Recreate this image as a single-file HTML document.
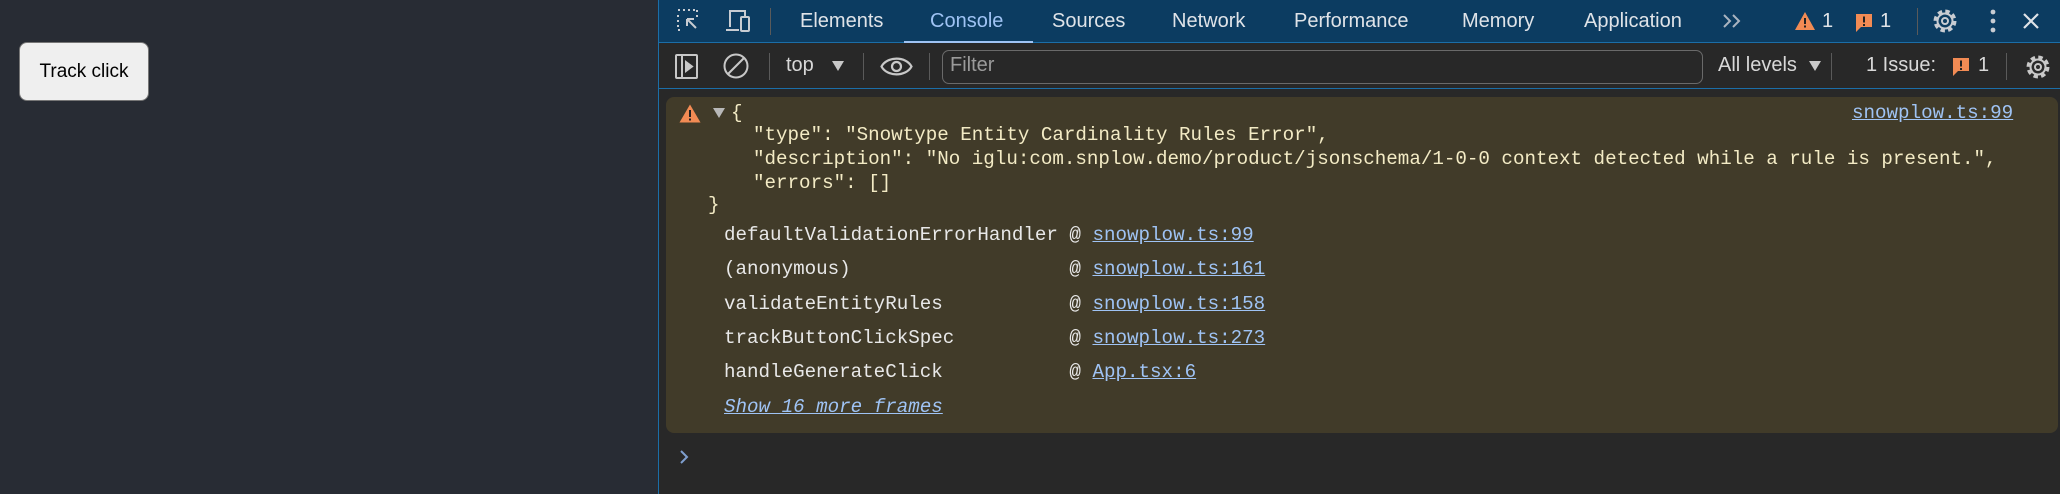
<!DOCTYPE html>
<html><head><meta charset="utf-8"><style>
*{margin:0;padding:0;box-sizing:border-box}
body{width:2060px;height:494px;overflow:hidden;background:#282828;font-family:"Liberation Sans",sans-serif;position:relative}
.abs{position:absolute}
#page{left:0;top:0;width:658px;height:494px;background:#282c34}
#btn{left:19px;top:42px;width:130px;height:59px;background:#efefef;border:1px solid #767676;border-radius:8px;font-size:19px;color:#000;text-align:center;line-height:57px}
#dt{left:658px;top:0;width:1402px;height:494px;background:#282828;border-left:1px solid #1b6ea8}
#tabs{left:0;top:0;width:2060px;height:43px;}
#tabbg{left:659px;top:0;width:1401px;height:43px;background:#0c3c61;border-bottom:1px solid #1b6ea8}
.tab{position:absolute;top:0;height:43px;line-height:42px;font-size:20px;color:#dfe3e8}
#toolbg{left:659px;top:44px;width:1401px;height:45px;background:#282828;border-bottom:1px solid #1b6ea8}
.t2{position:absolute;font-size:20px;color:#d8d8d8;top:54px}
.sep{position:absolute;width:1px;background:#5a5a5a}
.mono{font-family:"Liberation Mono","DejaVu Sans Mono",monospace;font-size:19.2px;white-space:pre;position:absolute;line-height:22px}
#card{left:666px;top:97px;width:1392px;height:336px;background:#413b29;border-radius:8px}
.y{color:#f3ebc5}
.w{color:#e8e8e8}
.l{color:#9fc3f4;text-decoration:underline}
</style></head><body>
<div id="page" class="abs"></div>
<div id="btn" class="abs">Track click</div>
<div id="dt" class="abs"></div>
<div id="tabbg" class="abs"></div>
<div id="toolbg" class="abs"></div>

<svg class="abs" style="left:677px;top:9px" width="24" height="24" viewBox="0 0 24 24" fill="none" stroke="#c8ccd2" stroke-width="2"><path d="M1 1h2M6 1h2M11 1h2M16 1h2M1 6v2M1 11v2M1 16v2M1 21h2M20 1v2M20 6v2"/><path d="M10 10l9 9M10 10h7M10 10v7"/></svg>
<svg class="abs" style="left:725px;top:9px" width="27" height="24" viewBox="0 0 27 24" fill="none" stroke="#c8ccd2" stroke-width="2"><path d="M5 18V2h15v5"/><path d="M1 21h13"/><rect x="16" y="8" width="8" height="14" rx="1"/></svg>
<div class="sep" style="left:770px;top:8px;height:27px"></div>
<div class="tab" style="left:800px">Elements</div>
<div class="tab" style="left:930px;color:#9fc3f4">Console</div>
<div class="abs" style="left:904px;top:41px;width:129px;height:2px;background:#9fc3f4"></div>
<div class="tab" style="left:1052px">Sources</div>
<div class="tab" style="left:1172px">Network</div>
<div class="tab" style="left:1294px">Performance</div>
<div class="tab" style="left:1462px">Memory</div>
<div class="tab" style="left:1584px">Application</div>
<svg class="abs" style="left:1722px;top:13px" width="20" height="16" viewBox="0 0 20 16" fill="none" stroke="#aab4c0" stroke-width="2"><path d="M2 2l6 6-6 6M11 2l6 6-6 6"/></svg>
<svg class="abs" style="left:1794px;top:11px" width="22" height="20" viewBox="0 0 22 20"><path d="M11 1L21 19H1Z" fill="#f28b54"/><rect x="10" y="7" width="2" height="6" fill="#222"/><rect x="10" y="14.5" width="2" height="2" fill="#222"/></svg>
<div class="tab" style="left:1822px">1</div>
<svg class="abs" style="left:1855px;top:13px" width="18" height="20" viewBox="0 0 18 20"><path d="M1 1h16v13H6l-5 5Z" fill="#f28b54"/><rect x="8" y="3.5" width="2" height="6" fill="#222"/><rect x="8" y="11" width="2" height="2" fill="#222"/></svg>
<div class="tab" style="left:1880px">1</div>
<div class="sep" style="left:1917px;top:8px;height:27px"></div>
<svg class="abs" style="left:1931px;top:7px" width="28" height="28" viewBox="0 0 28 28" fill="none" stroke="#c8ccd2"><circle cx="14" cy="14" r="9" stroke-width="5" stroke-dasharray="4.07 3"/><circle cx="14" cy="14" r="7.5" stroke-width="2"/><circle cx="14" cy="14" r="3" stroke-width="2"/></svg>
<svg class="abs" style="left:1989px;top:8px" width="8" height="26" viewBox="0 0 8 26" fill="#c8ccd2"><circle cx="4" cy="4" r="2.4"/><circle cx="4" cy="13" r="2.4"/><circle cx="4" cy="22" r="2.4"/></svg>
<svg class="abs" style="left:2022px;top:12px" width="18" height="18" viewBox="0 0 18 18" stroke="#dfe3e8" stroke-width="2.2"><path d="M2 2l14 14M16 2L2 16"/></svg>

<svg class="abs" style="left:675px;top:54px" width="23" height="25" viewBox="0 0 23 25" fill="none" stroke="#c8c8c8" stroke-width="2"><rect x="1" y="1" width="21" height="23" rx="1"/><path d="M7 1v23"/><path d="M11 8l6 4.5L11 17Z" fill="#c8c8c8"/></svg>
<svg class="abs" style="left:723px;top:53px" width="26" height="26" viewBox="0 0 26 26" fill="none" stroke="#c8c8c8" stroke-width="2"><circle cx="13" cy="13" r="11.5"/><path d="M5 21L21 5"/></svg>
<div class="sep" style="left:769px;top:53px;height:27px"></div>
<div class="t2" style="left:786px">top</div>
<svg class="abs" style="left:832px;top:61px" width="12" height="10" viewBox="0 0 12 10"><path d="M0 0h12L6 10Z" fill="#c8c8c8"/></svg>
<div class="sep" style="left:863px;top:53px;height:27px"></div>
<svg class="abs" style="left:880px;top:55px" width="33" height="23" viewBox="0 0 33 23" fill="none" stroke="#c8c8c8" stroke-width="2.2"><path d="M1.5 11.5C7 1 26 1 31.5 11.5C26 22 7 22 1.5 11.5Z"/><circle cx="16.5" cy="11.5" r="4.5"/></svg>
<div class="sep" style="left:929px;top:53px;height:27px"></div>
<div class="abs" style="left:942px;top:50px;width:761px;height:34px;border:1px solid #6a6a6a;border-radius:7px"></div>
<div class="t2" style="left:950px;color:#9a9a9a">Filter</div>
<div class="t2" style="left:1718px">All levels</div>
<svg class="abs" style="left:1809px;top:61px" width="12" height="10" viewBox="0 0 12 10"><path d="M0 0h12L6 10Z" fill="#c8c8c8"/></svg>
<div class="sep" style="left:1831px;top:53px;height:27px"></div>
<div class="t2" style="left:1866px">1 Issue:</div>
<svg class="abs" style="left:1952px;top:57px" width="18" height="20" viewBox="0 0 18 20"><path d="M1 1h16v13H6l-5 5Z" fill="#f28b54"/><rect x="8" y="3.5" width="2" height="6" fill="#222"/><rect x="8" y="11" width="2" height="2" fill="#222"/></svg>
<div class="t2" style="left:1978px">1</div>
<div class="sep" style="left:2006px;top:53px;height:27px"></div>
<svg class="abs" style="left:2024px;top:53px" width="28" height="28" viewBox="0 0 28 28" fill="none" stroke="#c8c8c8"><circle cx="14" cy="14" r="9" stroke-width="5" stroke-dasharray="4.07 3"/><circle cx="14" cy="14" r="7.5" stroke-width="2"/><circle cx="14" cy="14" r="3" stroke-width="2"/></svg>

<div id="card" class="abs"></div>
<svg class="abs" style="left:679px;top:104px" width="22" height="19" viewBox="0 0 22 19"><path d="M11 0.5L21.5 18.5H0.5Z" fill="#f28b54"/><rect x="10" y="6" width="2" height="7" fill="#222"/><rect x="10" y="14.5" width="2" height="2" fill="#222"/></svg>
<div class="abs" style="left:713px;top:108px;width:0;height:0;border-left:6px solid transparent;border-right:6px solid transparent;border-top:10px solid #b8b8b8"></div>
<div class="mono y" style="left:731px;top:102px">{</div>
<div class="mono y" style="left:753px;top:124px">"type": "Snowtype Entity Cardinality Rules Error",</div>
<div class="mono y" style="left:753px;top:148px">"description": "No iglu:com.snplow.demo/product/jsonschema/1-0-0 context detected while a rule is present.",</div>
<div class="mono y" style="left:753px;top:172px">"errors": []</div>
<div class="mono y" style="left:708px;top:194px">}</div>
<div class="mono l" style="left:1852px;top:102px">snowplow.ts:99</div>
<div class="mono w" style="left:724px;top:224px">defaultValidationErrorHandler @ <span class="l">snowplow.ts:99</span></div>
<div class="mono w" style="left:724px;top:258px">(anonymous)                   @ <span class="l">snowplow.ts:161</span></div>
<div class="mono w" style="left:724px;top:293px">validateEntityRules           @ <span class="l">snowplow.ts:158</span></div>
<div class="mono w" style="left:724px;top:327px">trackButtonClickSpec          @ <span class="l">snowplow.ts:273</span></div>
<div class="mono w" style="left:724px;top:361px">handleGenerateClick           @ <span class="l">App.tsx:6</span></div>
<div class="mono l" style="left:724px;top:396px;font-style:italic">Show 16 more frames</div>
<svg class="abs" style="left:679px;top:450px" width="10" height="14" viewBox="0 0 10 14" fill="none" stroke="#7f9fcf" stroke-width="2"><path d="M2 1l6 6-6 6"/></svg>
</body></html>
